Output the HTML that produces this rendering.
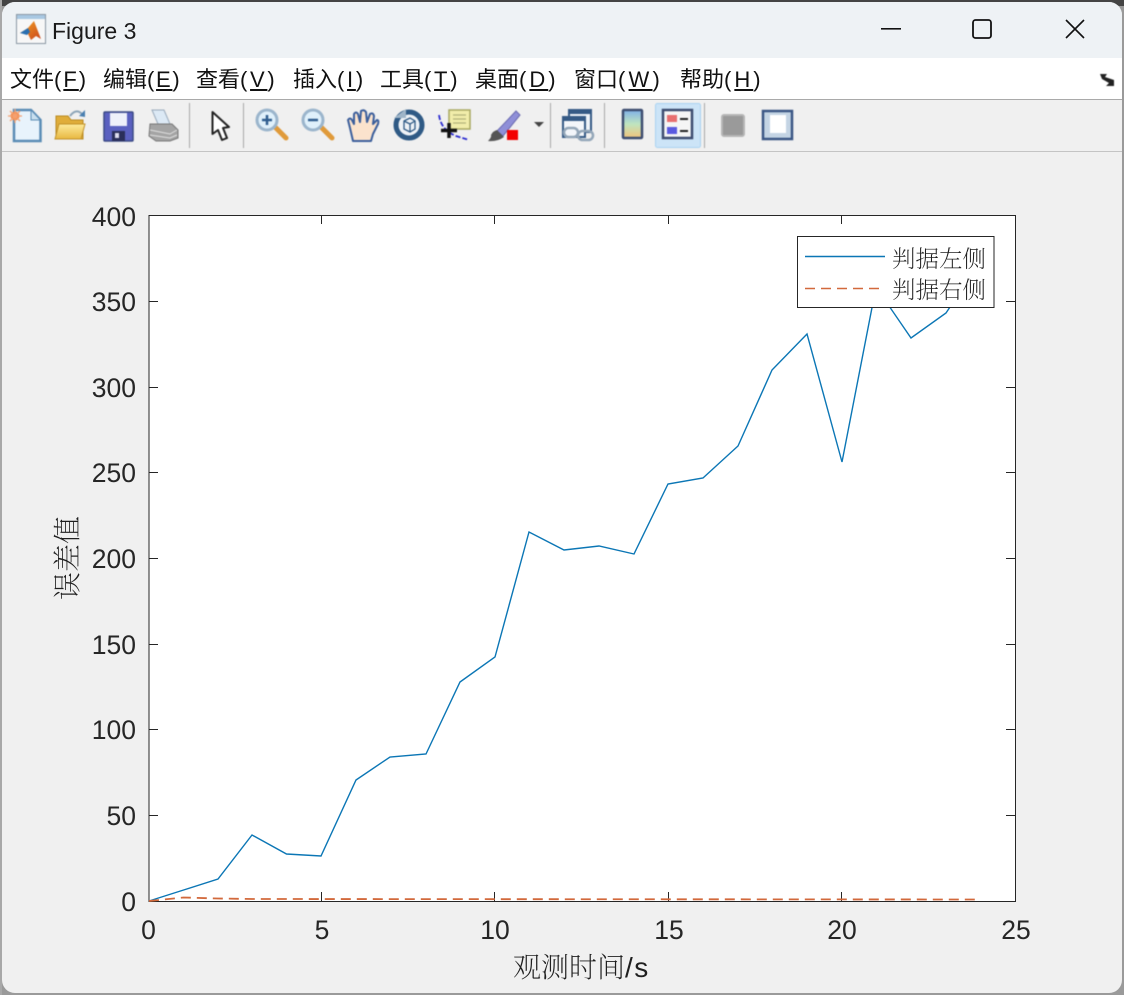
<!DOCTYPE html>
<html><head><meta charset="utf-8"><style>
html,body{margin:0;padding:0;background:#8c8c8c}
body{width:1124px;height:995px;position:relative;overflow:hidden}
svg{position:absolute;left:0;top:0}
.m{position:absolute;top:64px;font:22px/32px "Liberation Sans","Noto Sans CJK SC",sans-serif;color:#111;white-space:nowrap}
.m u{text-underline-offset:2px}
.t{font-family:"Liberation Sans",sans-serif;font-size:26.500px;fill:#262626}
.s{font-family:"Liberation Serif","Noto Serif CJK SC",serif;fill:#1f1f1f}
.ic{filter:blur(.45px)}
</style></head><body>
<svg width="1124" height="995" viewBox="0 0 1124 995">
<defs>
<linearGradient id="cb" x1="0" y1="0" x2="0" y2="1"><stop offset="0" stop-color="#7fb0e8"/><stop offset=".5" stop-color="#bfe5c0"/><stop offset="1" stop-color="#f2c47a"/></linearGradient>
<linearGradient id="fo" x1="0" y1="0" x2="0" y2="1"><stop offset="0" stop-color="#fdeb9c"/><stop offset="1" stop-color="#e8b840"/></linearGradient>
<linearGradient id="ml" x1="0" y1="0" x2="1" y2="1"><stop offset="0" stop-color="#f5a623"/><stop offset="1" stop-color="#c9431a"/></linearGradient>
</defs>
<rect width="1124" height="995" fill="#9a9a9a"/>
<rect width="1124" height="6" fill="#444"/>
<rect x="0" y="0" width="2" height="995" fill="#a8a8a8"/>
<rect x="2" y="2" width="1120" height="991" rx="13" fill="#f0f0f0"/>
<path d="M2 58V15a13 13 0 0 1 13-13H1109a13 13 0 0 1 13 13V58Z" fill="#eef2f5"/>
<rect x="2" y="58" width="1120" height="41" fill="#fff"/>
<rect x="2" y="99" width="1120" height="1" fill="#a9a9a9"/>
<rect x="2" y="151" width="1120" height="1" fill="#c4c4c4"/>

<g class="ic">
<!-- title icon -->
<rect x="16.500" y="14.500" width="29" height="29" fill="#f7f7f7" stroke="#8a97a3"/>
<rect x="17" y="15" width="28" height="4" fill="#a9c8e2"/>
<path d="M20 33 L28 28 L34 21 L41 39 L36 36 L31 40 L28 34Z" fill="url(#ml)"/>
<path d="M20 33 L28 28 L30 32 L27 35Z" fill="#2a6fb0"/>
<path d="M1100 74 L1107 74 L1105 77 L1114 80 L1114 86 L1106 86 L1109 83 L1102 79Z" fill="#222"/>

<!-- separators -->
<g fill="#a8a8a8"><rect x="189" y="103" width="1" height="45"/><rect x="243" y="103" width="1" height="45"/><rect x="550" y="103" width="1" height="45"/><rect x="604" y="103" width="1" height="45"/><rect x="704" y="103" width="1" height="45"/></g>
<rect x="655.500" y="103.500" width="45" height="44" rx="2" fill="#cce4f7" stroke="#a9d3f2"/>

<!-- new -->
<path d="M14 110H31L40.500 120V141H14Z" fill="#e8f3fc" stroke="#5a8cb5" stroke-width="2.500"/>
<path d="M31 110V120H40.500Z" fill="#c8dfef" stroke="#5a8cb5"/>
<circle cx="15" cy="116" r="4.500" fill="#f28a4a"/>
<path d="M15 109V123M8 116H22M10 111L20 121M20 111L10 121" stroke="#f4a070" stroke-width="1.300"/>
<!-- open -->
<path d="M56 116H68L71 120H83V139H56Z" fill="#e0ad3a" stroke="#b98a20"/>
<path d="M55 139L59 124H85L81 139Z" fill="url(#fo)" stroke="#c2922a"/>
<path d="M70 116Q76 108 82 114" stroke="#8da5b8" stroke-width="2" fill="none"/>
<path d="M79 116L85 110V117Z" fill="#4a7fb0"/>
<!-- save -->
<rect x="104" y="112" width="29" height="29" rx="1" fill="#5a60c0" stroke="#3b4a86" stroke-width="1.500"/>
<rect x="110" y="113" width="17" height="13" fill="#eef0fa"/>
<rect x="112" y="131" width="13" height="10" fill="#2a2f5a"/>
<rect x="115" y="133" width="4" height="5" fill="#dde"/>
<!-- print -->
<path d="M152 110H164L170 124H158Z" fill="#dce9f5" stroke="#9ab"/>
<path d="M150 124H172L178 130V138L170 141H156L149 136Z" fill="#a4a4a4" stroke="#777"/>
<path d="M150 130L170 134L177 130M150 135L170 138L177 135" stroke="#e0e0e0" fill="none"/>
<!-- pointer -->
<path d="M212.500 112 L212.500 134 L218 130 L222 140 L227 138 L223 128 L229 127Z" fill="#fff" stroke="#222" stroke-width="2" stroke-linejoin="round"/>
<!-- zoom in -->
<path d="M275 127L286 138" stroke="#e09a3a" stroke-width="5" stroke-linecap="round"/>
<circle cx="267" cy="120" r="10" fill="#dff0fb" stroke="#9bb5cc" stroke-width="3"/>
<path d="M262 120H272M267 115V125" stroke="#2f5d8f" stroke-width="2.500"/>
<!-- zoom out -->
<path d="M321 127L332 138" stroke="#e09a3a" stroke-width="5" stroke-linecap="round"/>
<circle cx="313" cy="120" r="10" fill="#dff0fb" stroke="#9bb5cc" stroke-width="3"/>
<path d="M308 120H318" stroke="#2f5d8f" stroke-width="2.500"/>
<!-- hand -->
<path d="M353 141 L350 128 L348 120 Q350 117 352 120 L354 124 L354 114 Q356 111 358 114 L360 122 L361 111 Q364 109 366 112 L367 122 L370 114 Q373 112 374 116 L373 124 L377 120 Q379 120 378 124 L373 134 L371 141Z" fill="#fbe3cd" stroke="#3c5f9c" stroke-width="2" stroke-linejoin="round"/>
<!-- rotate -->
<circle cx="409" cy="125" r="13" fill="#eef2f6" stroke="#2f5a85" stroke-width="5"/>
<path d="M394 118 L406 109 L406 118Z" fill="#9fb5c8"/>
<path d="M404 121L410 118L415 121V129L410 132L404 129ZM404 121L410 124L415 121M410 124V132" fill="none" stroke="#2f5a85" stroke-width="1.300"/>
<!-- data cursor -->
<path d="M439 115Q441 130 456 136L469 140" fill="none" stroke="#2a2ad0" stroke-width="1.800" stroke-dasharray="5 2"/>
<rect x="449" y="110" width="21" height="19" fill="#f1edaa" stroke="#a8a860" stroke-width="1.500"/>
<path d="M453 115H466M453 119H466M453 123H466" stroke="#b3b27a" stroke-width="1.300"/>
<path d="M449 123V138M441 130.500H457" stroke="#111" stroke-width="3.500"/>
<!-- brush -->
<path d="M497 131L516 111L520 115L503 136Z" fill="#8f8fd8" stroke="#6a6ab0"/>
<path d="M497 130L504 137Q497 142 488 141Q492 137 491 135Q493 131 497 130Z" fill="#555"/>
<rect x="507" y="130" width="11" height="10" fill="#f30000"/>
<path d="M534 122H544L539 127Z" fill="#444"/>
<!-- link -->
<rect x="569" y="110" width="22" height="22" fill="#eef3f8" stroke="#355a85" stroke-width="2"/>
<rect x="569" y="110" width="22" height="4" fill="#355a85"/>
<rect x="563" y="117" width="22" height="20" fill="#f3f6fa" stroke="#355a85" stroke-width="2"/>
<rect x="563" y="117" width="22" height="4" fill="#355a85"/>
<rect x="564" y="128" width="14" height="9" rx="4.500" fill="none" stroke="#93a6b8" stroke-width="2.500"/>
<rect x="578" y="131" width="15" height="9" rx="4.500" fill="none" stroke="#93a6b8" stroke-width="2.500"/>
<!-- colorbar -->
<rect x="623" y="110" width="19" height="28" rx="1" fill="url(#cb)" stroke="#3d4d70" stroke-width="2.500"/>
<!-- legend icon -->
<rect x="663" y="110" width="29" height="28" fill="#f5f5f5" stroke="#3d4d70" stroke-width="2.500"/>
<rect x="667" y="115" width="10" height="7" fill="#e86f6f"/>
<rect x="667" y="127" width="10" height="7" fill="#5a5ae0"/>
<rect x="680" y="118" width="8" height="2" fill="#222"/>
<rect x="680" y="130" width="8" height="2" fill="#222"/>
<!-- gray -->
<rect x="722" y="115" width="22" height="21" rx="2" fill="#9a9a9a" stroke="#b5b5b5" stroke-width="2"/>
<!-- frame -->
<rect x="763" y="111" width="29" height="28" fill="#c4d4e4" stroke="#3a5685" stroke-width="2.500"/>
<rect x="770" y="115" width="16" height="18" fill="#fff"/>
</g>

<text x="52" y="39" font-family="Liberation Sans,sans-serif" font-size="23" fill="#1a1a1a">Figure 3</text>

<!-- window controls -->
<rect x="881" y="28" width="20" height="1.600" fill="#111"/>
<rect x="973" y="20" width="18" height="18" rx="2.500" fill="none" stroke="#111" stroke-width="1.800"/>
<path d="M1066 20 L1084 38 M1084 20 L1066 38" stroke="#111" stroke-width="1.600" fill="none"/>

<!-- axes -->
<rect x="149" y="215" width="866" height="686" fill="#fff"/>
<path d="M149 815.500h9M149 729.500h9M149 644.500h9M149 558.500h9M149 472.500h9M149 387.500h9M149 301.500h9
M1015 815.500h-9M1015 729.500h-9M1015 644.500h-9M1015 558.500h-9M1015 472.500h-9M1015 387.500h-9M1015 301.500h-9
M321.500 901v-9M494.500 901v-9M668.500 901v-9M841.500 901v-9
M321.500 215v9M494.500 215v9M668.500 215v9M841.500 215v9" stroke="#262626" fill="none"/>
<polyline fill="none" stroke="#0b76b5" stroke-width="1.400" points="149,901 183.600,890 218,879 252,835 286.500,854 321,856 356,780 390,757 426,754 460,682 495,657 529,532 564,550 599,546 634,554 668,484 703,478 738,446 772,370 807,334 842,462 876,287 911,338 946,313 980,262"/>
<rect x="149" y="215.500" width="866.500" height="686" fill="none" stroke="#262626"/>
<polyline fill="none" stroke="#d2693c" stroke-width="1.800" stroke-dasharray="10 6" points="149,901 183.600,897.500 218,898.500 252,899 980,899.500"/>

<!-- legend -->
<rect x="797.500" y="236.500" width="196.500" height="71" fill="#fff" stroke="#262626"/>
<path d="M805 256.500H885" stroke="#0b76b5" stroke-width="1.400"/>
<path d="M805 288.500H881" stroke="#d2693c" stroke-width="1.400" stroke-dasharray="10 6"/>
<text class="s" x="892" y="267" font-size="23.500" font-weight="200">判据左侧</text>
<text class="s" x="892" y="298" font-size="23.500" font-weight="200">判据右侧</text>

<!-- tick labels -->
<g class="t" text-anchor="end">
<text x="136" y="911">0</text><text x="136" y="825">50</text><text x="136" y="739">100</text><text x="136" y="654">150</text><text x="136" y="568">200</text><text x="136" y="482">250</text><text x="136" y="397">300</text><text x="136" y="311">350</text><text x="136" y="226">400</text>
</g>
<g class="t" text-anchor="middle">
<text x="148.500" y="939">0</text><text x="322" y="939">5</text><text x="495" y="939">10</text><text x="669" y="939">15</text><text x="842" y="939">20</text><text x="1016" y="939">25</text>
</g>
<text class="s" x="513" y="977" font-size="28" font-weight="200">观测时间<tspan font-family="Liberation Sans,sans-serif" font-size="28" letter-spacing="1.500">/s</tspan></text>
<text class="s" transform="translate(77,600) rotate(-90)" font-size="28" font-weight="200">误差值</text>
</svg>
<div class="m" style="left:10px">文件<span style="letter-spacing:2px">(<u>F</u>)</span></div>
<div class="m" style="left:103px">编辑<span style="letter-spacing:1.700px">(<u>E</u>)</span></div>
<div class="m" style="left:196px">查看<span style="letter-spacing:2.700px">(<u>V</u>)</span></div>
<div class="m" style="left:293px">插入<span style="letter-spacing:2.700px">(<u>I</u>)</span></div>
<div class="m" style="left:380px">工具<span style="letter-spacing:2.700px">(<u>T</u>)</span></div>
<div class="m" style="left:475px">桌面<span style="letter-spacing:3px">(<u>D</u>)</span></div>
<div class="m" style="left:574px">窗口<span style="letter-spacing:3.200px">(<u>W</u>)</span></div>
<div class="m" style="left:680px">帮助<span style="letter-spacing:3px">(<u>H</u>)</span></div>
</body></html>
